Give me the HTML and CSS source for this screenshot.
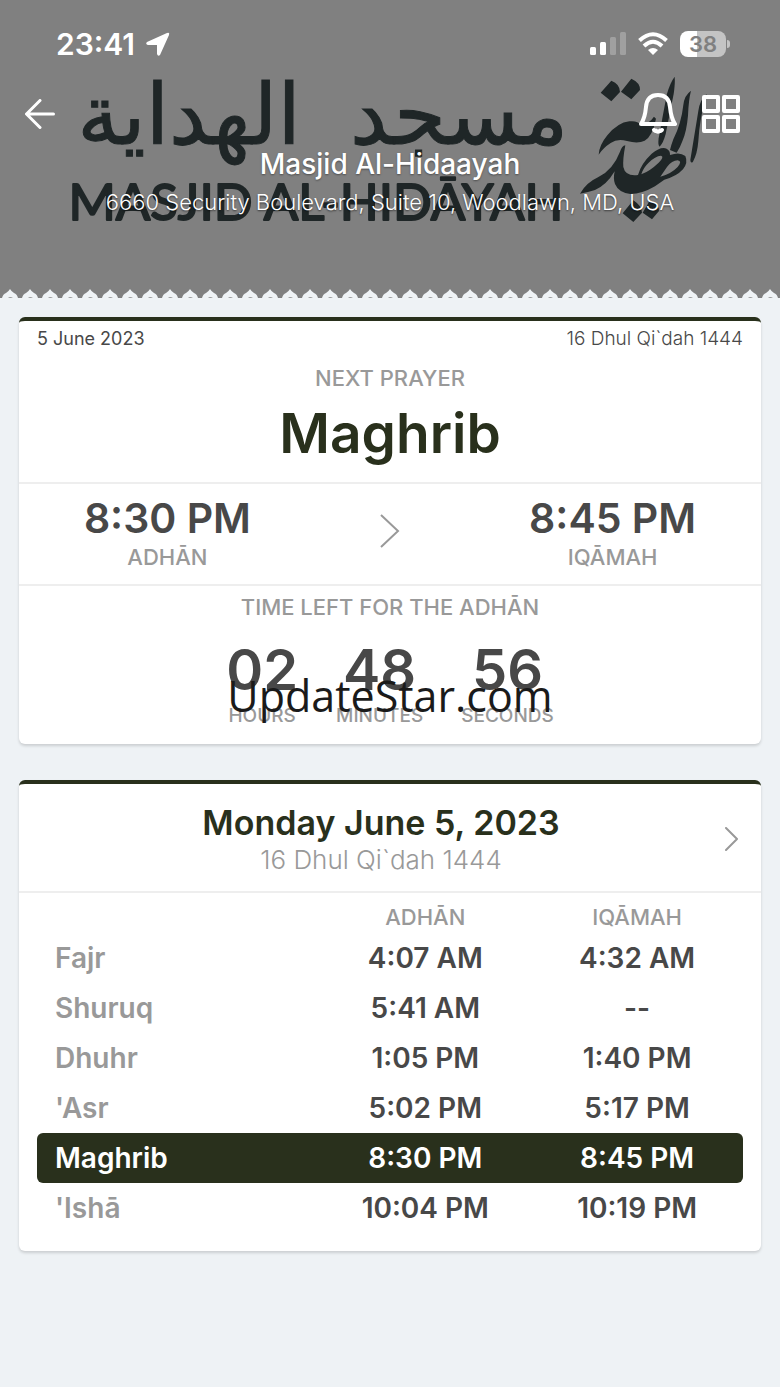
FILE: index.html
```html
<!DOCTYPE html>
<html lang="en">
<head>
  <meta charset="UTF-8">
  <meta name="viewport" content="width=device-width, initial-scale=1">
  <title>Masjid Al-Hidaayah</title>
  <link rel="stylesheet" href="styles.css">
</head>
<body>
  <header class="banner">
    <svg class="banner-logo" viewBox="0 0 780 240" aria-hidden="true">
      <text class="logo-arabic" x="459" y="144">مسجد</text>
      <text class="logo-arabic" x="189" y="144">الهداية</text>
      <text class="logo-latin" x="316" y="220">MASJID AL-HIDĀYAH</text>
      <!-- emblem -->
      <g transform="translate(570 70) scale(.3333)">
        <path d="M92 68L124 32Q150 42 150 66L124 94ZM153 65L184 26Q211 38 210 60L184 88ZM158 430L190 391Q216 408 216 428L190 456ZM218 428L240 391Q268 404 267 423L246 448Z"/>
        <path d="M86 254Q88 225 112 196Q143 158 178 154Q202 151 213 164Q237 162 252 140L258 146Q248 198 224 212Q204 222 171 213Q142 205 122 219Q99 234 86 254Z"/>
        <path d="M314 20Q300 38 290 75L266 205Q263 225 269 230Q280 219 287 192L311 72Q316 38 314 20Z"/>
        <path d="M363 62Q343 76 340 105Q334 160 310 208Q304 224 300 240L320 248Q330 234 337 214Q350 184 354 137Q356 88 363 62Z"/>
        <path d="M410 72Q390 88 385 123L361 270Q362 282 369 275Q382 252 385 214Q388 150 410 72Z"/>
        <path fill-rule="evenodd" d="M30 371Q49 338 84 322Q129 300 150 245Q156 227 166 226Q158 268 160 291Q166 320 204 315Q213 281 245 251Q272 229 290 236Q301 242 300 255Q329 244 346 258Q355 278 339 298Q319 320 283 329L255 349Q216 372 181 372Q146 368 135 342Q129 327 134 304Q110 345 75 360Q50 368 30 371ZM214 313Q240 303 266 278Q284 260 273 257Q256 258 236 278Q219 294 214 313ZM271 320Q303 312 323 291Q338 273 323 271Q306 271 291 291Z"/>
      </g>
    </svg>

    <div class="status-bar">
      <div class="status-left">
        <span class="clock">23:41</span>
        <svg width="25" height="25" viewBox="0 0 25 25" aria-hidden="true"><path d="M22 1Q25 0 24 3L15 23Q13 25 12 22V13H3Q0 12 2 10Z"/></svg>
      </div>
      <div class="status-right">
        <svg width="36" height="24" viewBox="0 0 36 24" aria-hidden="true">
          <rect x="0" y="15" width="6" height="8" rx="1.5"/>
          <rect x="10" y="10" width="6" height="13" rx="1.5"/>
          <g opacity=".25"><rect x="20" y="5" width="6" height="18" rx="1.5"/><rect x="30" y="0" width="6" height="23" rx="1.5"/></g>
        </svg>
        <svg width="30" height="24" viewBox="0 0 30 24" aria-hidden="true">
          <path d="M15 23L10 18Q15 14 20 18Z"/>
          <path d="M1.500 8.500Q15-4 28.500 8.500M6 14Q15 5.500 24 14" fill="none" stroke="#fff" stroke-width="4"/>
        </svg>
        <span class="battery">38</span>
      </div>
    </div>

    <nav class="toolbar">
      <button class="icon-button" aria-label="Back">
        <svg width="30" height="30" viewBox="0 0 30 30"><path d="M28.500 15H2M15 1.500L1.500 15L15 28.500"/></svg>
      </button>
      <div class="toolbar-right">
        <button class="icon-button" aria-label="Notifications">
          <svg width="38" height="42" viewBox="0 0 38 42"><path d="M2 31Q6 25 7 14Q8 2 19 2Q30 2 31 14Q32 25 36 31Z"/><path d="M15 37Q16 38.500 17 37.500Q19 40 21 37.500Q22 38.500 23 37"/></svg>
        </button>
        <button class="icon-button" aria-label="Menu">
          <svg width="38" height="38" viewBox="0 0 38 38"><path d="M2 2H16V16H2ZM22 2H36V16H22ZM2 22H16V36H2ZM22 22H36V36H22Z"/></svg>
        </button>
      </div>
    </nav>

    <h1>Masjid Al-Hidaayah</h1>
    <p class="address">6660 Security Boulevard, Suite 10, Woodlawn, MD, USA</p>

    <svg class="scallops" width="100%" height="12" aria-hidden="true">
      <defs>
        <pattern id="scallop" width="20" height="12" patternUnits="userSpaceOnUse">
          <path d="M0 10H2Q3 6 6 5Q9 3 10 1Q11 3 14 5Q17 6 18 10H20V12H0Z" fill="#eff3f6"/>
          <path d="M8 10Q10 8 13 10Z" fill="#999"/>
        </pattern>
      </defs>
      <rect width="100%" height="12" fill="url(#scallop)"/>
    </svg>
  </header>

  <main>
    <section class="card">
      <div class="next-prayer">
        <div class="dates">
          <span>5 June 2023</span>
          <span class="hijri">16 Dhul Qi`dah 1444</span>
        </div>
        <div class="label">NEXT PRAYER</div>
        <h2 class="prayer-name">Maghrib</h2>
      </div>
      <div class="times">
        <div>
          <div class="time">8:30 PM</div>
          <div class="label">ADHĀN</div>
        </div>
        <svg class="chevron" width="20" height="34" viewBox="0 0 20 34" aria-hidden="true"><path d="M1 1L18 17L1 33"/></svg>
        <div>
          <div class="time">8:45 PM</div>
          <div class="label">IQĀMAH</div>
        </div>
      </div>
      <div class="time-left">
        <div class="label">TIME LEFT FOR THE ADHĀN</div>
        <div class="countdown">
          <div><div class="digits">02</div><div class="unit">HOURS</div></div>
          <div><div class="digits">48</div><div class="unit">MINUTES</div></div>
          <div><div class="digits">56</div><div class="unit">SECONDS</div></div>
        </div>
      </div>
    </section>

    <section class="card">
      <div class="day-header">
        <div class="day">
          <h2>Monday June 5, 2023</h2>
          <p>16 Dhul Qi`dah 1444</p>
        </div>
        <button class="icon-button" aria-label="Next day">
          <svg class="chevron" width="14" height="24" viewBox="0 0 14 24"><path d="M1 1L12 12L1 23"/></svg>
        </button>
      </div>
      <table class="schedule">
        <thead>
          <tr><td></td><th scope="col">ADHĀN</th><th scope="col">IQĀMAH</th></tr>
        </thead>
        <tbody>
          <tr><th scope="row">Fajr</th><td>4:07 AM</td><td>4:32 AM</td></tr>
          <tr><th scope="row">Shuruq</th><td>5:41 AM</td><td>--</td></tr>
          <tr><th scope="row">Dhuhr</th><td>1:05 PM</td><td>1:40 PM</td></tr>
          <tr><th scope="row">'Asr</th><td>5:02 PM</td><td>5:17 PM</td></tr>
          <tr class="current"><th scope="row">Maghrib</th><td>8:30 PM</td><td>8:45 PM</td></tr>
          <tr><th scope="row">'Ishā</th><td>10:04 PM</td><td>10:19 PM</td></tr>
        </tbody>
      </table>
    </section>
  </main>

  <div class="watermark">UpdateStar.com</div>
</body>
</html>
```
FILE: styles.css
```css
* {
  box-sizing: border-box;
}

body {
  margin: 0;
  min-height: 100vh;
  position: relative;
  background: #eef2f5;
  color: #484848;
  font-family: Inter, "Liberation Sans", sans-serif;
}

h1, h2, p {
  margin: 0;
}

/* Banner */
.banner {
  position: relative;
  height: 300px;
  padding-top: 28px;
  background: #808080;
  color: #fff;
  text-align: center;
}

.banner-logo {
  position: absolute;
  top: 0;
  left: 0;
  width: 100%;
  fill: #1f2627;
}

.logo-arabic {
  font: 84px "DejaVu Sans", sans-serif;
  text-anchor: middle;
  stroke: #1f2627;
  stroke-width: 1;
}

.logo-latin {
  font: 51px Lato, sans-serif;
  text-anchor: middle;
  stroke: #1f2627;
  stroke-width: 2;
  stroke-linejoin: round;
}

.status-bar {
  position: relative;
  display: flex;
  justify-content: space-between;
  align-items: center;
  height: 32px;
  padding: 0 54px 0 56px;
  fill: #fff;
}

.status-left, .status-right {
  display: flex;
  align-items: center;
  gap: 10px;
}

.status-right {
  gap: 12px;
}

.clock {
  font-size: 30px;
  font-weight: 600;
}

.battery {
  position: relative;
  width: 46px;
  height: 26px;
  border-radius: 8px;
  background: linear-gradient(to right, #fff 38%, #c4c4c4 38%);
  color: #808080;
  font-size: 22px;
  font-weight: 600;
  line-height: 26px;
}

.battery::after {
  content: "";
  position: absolute;
  top: 9px;
  right: -4px;
  width: 3px;
  height: 8px;
  border-radius: 0 4px 4px 0;
  background: #c4c4c4;
}

.toolbar {
  position: relative;
  display: flex;
  justify-content: space-between;
  align-items: center;
  height: 42px;
  margin-top: 33px;
  padding: 0 40px 0 25px;
}

.toolbar-right {
  display: flex;
  align-items: center;
  gap: 25px;
}

.icon-button {
  display: flex;
  padding: 0;
  border: none;
  background: none;
  cursor: pointer;
}

.icon-button svg {
  fill: none;
  stroke: #fff;
  stroke-width: 3;
  stroke-linecap: round;
  stroke-linejoin: round;
}

.toolbar-right svg {
  stroke-width: 4;
}

h1 {
  position: relative;
  margin-top: 12px;
  font-size: 28px;
  font-weight: 500;
  line-height: 34px;
  text-shadow: 0 1px 2px rgba(0, 0, 0, 0.4);
}

.address {
  position: relative;
  margin-top: 8px;
  font-size: 22px;
  font-weight: 300;
  line-height: 26px;
  text-shadow: 0 1px 2px rgba(0, 0, 0, 0.6);
}

.scallops {
  position: absolute;
  left: 0;
  bottom: 0;
}

/* Cards */
main {
  display: flex;
  flex-direction: column;
  gap: 36px;
  padding: 17px 19px 36px;
}

.card {
  border-top: 4px solid #29301c;
  border-radius: 6px;
  background: #fff;
  box-shadow: 0 2px 3px rgba(0, 0, 0, 0.15);
  text-align: center;
}

.label, .schedule thead th {
  color: #999;
  font-size: 22px;
  font-weight: 500;
  line-height: 26px;
}

.next-prayer {
  height: 163px;
  padding: 6px 18px 0;
  border-bottom: 2px solid #eee;
}

.dates {
  display: flex;
  justify-content: space-between;
  margin-bottom: 14px;
  font-size: 18px;
  line-height: 24px;
}

.hijri {
  font-size: 19px;
  font-weight: 300;
}

.prayer-name {
  margin-top: 8px;
  color: #29301c;
  font-size: 55px;
  font-weight: 600;
  line-height: 68px;
}

.times {
  display: grid;
  grid-template-columns: 2fr 1fr 2fr;
  align-items: center;
  justify-items: center;
  height: 102px;
  padding-top: 6px;
  padding-bottom: 12px;
  border-bottom: 2px solid #eee;
}

.time {
  font-size: 41px;
  font-weight: 600;
  line-height: 52px;
}

.chevron {
  fill: none;
  stroke: #999;
  stroke-width: 2;
}

.icon-button .chevron {
  stroke: #999;
  stroke-width: 2;
}

.time-left {
  height: 158px;
  padding-top: 8px;
}

.countdown {
  display: flex;
  justify-content: center;
  gap: 38px;
  margin-top: 16px;
}

.digits {
  font-size: 56px;
  font-weight: 600;
  line-height: 68px;
}

.unit {
  color: #999;
  font-size: 19px;
  font-weight: 500;
  line-height: 24px;
}

/* Day schedule */
.day-header {
  display: flex;
  align-items: center;
  height: 109px;
  padding: 2px 22px 0 18px;
  border-bottom: 2px solid #eee;
}

.day {
  flex: 1;
}

.day h2 {
  color: #29301c;
  font-size: 34px;
  font-weight: 600;
  line-height: 42px;
}

.day p {
  color: #999;
  font-size: 26px;
  font-weight: 300;
  line-height: 32px;
}

.schedule {
  width: calc(100% - 36px);
  margin: 0 18px;
  border-collapse: collapse;
  table-layout: fixed;
  font-size: 28px;
}

.schedule td, .schedule th {
  width: 30%;
  height: 50px;
  padding: 0;
  font-weight: 600;
}

.schedule tr > :first-child {
  width: 40%;
  padding-left: 18px;
  color: #999;
  text-align: left;
}

.schedule thead td, .schedule thead th {
  height: 40px;
  padding-top: 8px;
  font-weight: 500;
}

.schedule .current > * {
  background: #29301c;
  color: #fff;
}

.schedule .current > :first-child {
  border-radius: 6px 0 0 6px;
  color: #fff;
}

.schedule .current > :last-child {
  border-radius: 0 6px 6px 0;
}

.card:last-child {
  padding-bottom: 18px;
}

.watermark {
  position: absolute;
  top: 50%;
  left: 50%;
  transform: translate(-50%, -50%);
  padding-top: 4px;
  color: #1a1a1a;
  font: 43px/52px "Open Sans", sans-serif;
}
```
